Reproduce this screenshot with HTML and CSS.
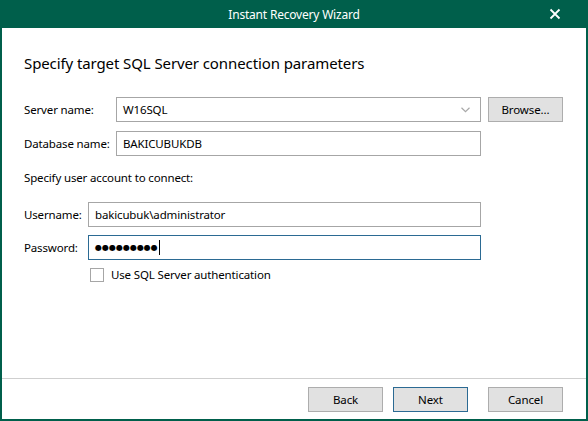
FILE: index.html
```html
<!DOCTYPE html>
<html>
<head>
<meta charset="utf-8">
<link rel="stylesheet" href="styles.css">
</head>
<body>
<div class="window">
  <div class="titlebar">
    <span class="title">Instant Recovery Wizard</span>
    <span class="close">
      <svg width="12" height="12" viewBox="0 0 12 12"><path d="M1.5 1.5 L10.5 10.5 M10.5 1.5 L1.5 10.5" stroke="#fff" stroke-width="1.8" fill="none"/></svg>
    </span>
  </div>
  <div class="content">
    <h1 class="heading">Specify target SQL Server connection parameters</h1>
    <div class="row row-server">
      <label class="label label-wide">Server name:</label>
      <div class="field combo">
        <span class="value">W16SQL</span>
        <svg class="chev" width="9" height="6" viewBox="0 0 9 6"><path d="M0.5 0.8 L4.5 4.6 L8.5 0.8" stroke="#a8a8a8" stroke-width="1.2" fill="none"/></svg>
      </div>
      <button class="btn browse">Browse...</button>
    </div>
    <div class="row row-db">
      <label class="label label-wide">Database name:</label>
      <div class="field wide"><span class="value">BAKICUBUKDB</span></div>
    </div>
    <p class="section">Specify user account to connect:</p>
    <div class="row row-user">
      <label class="label label-narrow">Username:</label>
      <div class="field long"><span class="value">bakicubuk\administrator</span></div>
    </div>
    <div class="row row-pass">
      <label class="label label-narrow">Password:</label>
      <div class="field long focus"><span class="value dots">●●●●●●●●●</span><span class="caret"></span></div>
    </div>
    <div class="check-row">
      <span class="checkbox"></span>
      <span class="check-label">Use SQL Server authentication</span>
    </div>
  </div>
  <div class="footer">
    <button class="btn">Back</button>
    <button class="btn default">Next</button>
    <button class="btn cancel">Cancel</button>
  </div>
</div>
</body>
</html>
```

FILE: styles.css
```css
html, body {
  margin: 0;
  padding: 0;
}
body {
  width: 588px;
  height: 421px;
  overflow: hidden;
  font-family: "Noto Sans", "Open Sans", sans-serif;
  font-size: 11.5px;
  color: #000;
  background: #fff;
}
.window {
  box-sizing: border-box;
  width: 588px;
  height: 421px;
  border: 2px solid #005f4b;
  border-top: none;
  display: flex;
  flex-direction: column;
}
.titlebar {
  height: 28px;
  background: #005f4b;
  color: #fff;
  display: flex;
  align-items: center;
  justify-content: center;
  position: relative;
  margin: 0 -2px;
}
.title {
  font-size: 12px;
  letter-spacing: -0.2px;
}
.close {
  position: absolute;
  right: 27px;
  top: 8px;
  width: 12px;
  height: 12px;
  display: flex;
}
.content {
  flex: 1;
  padding: 0 0 0 22px;
}
.heading {
  margin: 25px 0 0 0;
  font-size: 15px;
  font-weight: normal;
  line-height: 20px;
  letter-spacing: -0.1px;
}
.row {
  display: flex;
  align-items: center;
  height: 25px;
}
.row-server { margin-top: 24px; }
.row-db { margin-top: 9px; }
.row-user { margin-top: 0; }
.row-pass { margin-top: 8px; }
.label {
  flex: none;
  letter-spacing: -0.15px;
}
.label-wide { width: 92px; }
.label-narrow { width: 64px; }
.field {
  box-sizing: border-box;
  height: 25px;
  border: 1px solid #a6a6a6;
  display: flex;
  align-items: center;
  padding: 0 6px;
  background: #fff;
}
.combo {
  width: 365px;
  justify-content: space-between;
  padding-right: 10px;
}
.wide { width: 365px; }
.long { width: 393px; }
.focus { border-color: #2b6a93; }
.value { letter-spacing: -0.15px; }
.dots {
  font-size: 8px;
  letter-spacing: 0;
  font-family: "DejaVu Sans", sans-serif;
}
.caret {
  display: inline-block;
  width: 1px;
  height: 15px;
  background: #000;
  margin-left: 1px;
}
.section {
  margin: 15px 0 0 0;
  height: 31px;
  line-height: 14px;
  letter-spacing: -0.15px;
}
.check-row {
  display: flex;
  align-items: center;
  margin: 7px 0 0 66px;
}
.checkbox {
  box-sizing: border-box;
  width: 14px;
  height: 14px;
  border: 1px solid #a6a6a6;
  background: #fff;
  margin-right: 7px;
}
.check-label { letter-spacing: -0.15px; }
.btn {
  box-sizing: border-box;
  width: 75px;
  height: 25px;
  background: #e1e1e1;
  border: 1px solid #adadad;
  font-family: "Noto Sans", "Open Sans", sans-serif;
  font-size: 11.5px;
  color: #000;
  padding: 0;
  letter-spacing: -0.1px;
}
.browse {
  margin-left: 7px;
}
.default {
  border-color: #2b6a93;
}
.footer {
  height: 41px;
  border-top: 1px solid #cfcfcf;
  display: flex;
  justify-content: flex-end;
  align-items: flex-start;
  padding: 8px 23px 0 0;
  gap: 10px;
  box-sizing: border-box;
}
.cancel { margin-left: 10px; }
```
